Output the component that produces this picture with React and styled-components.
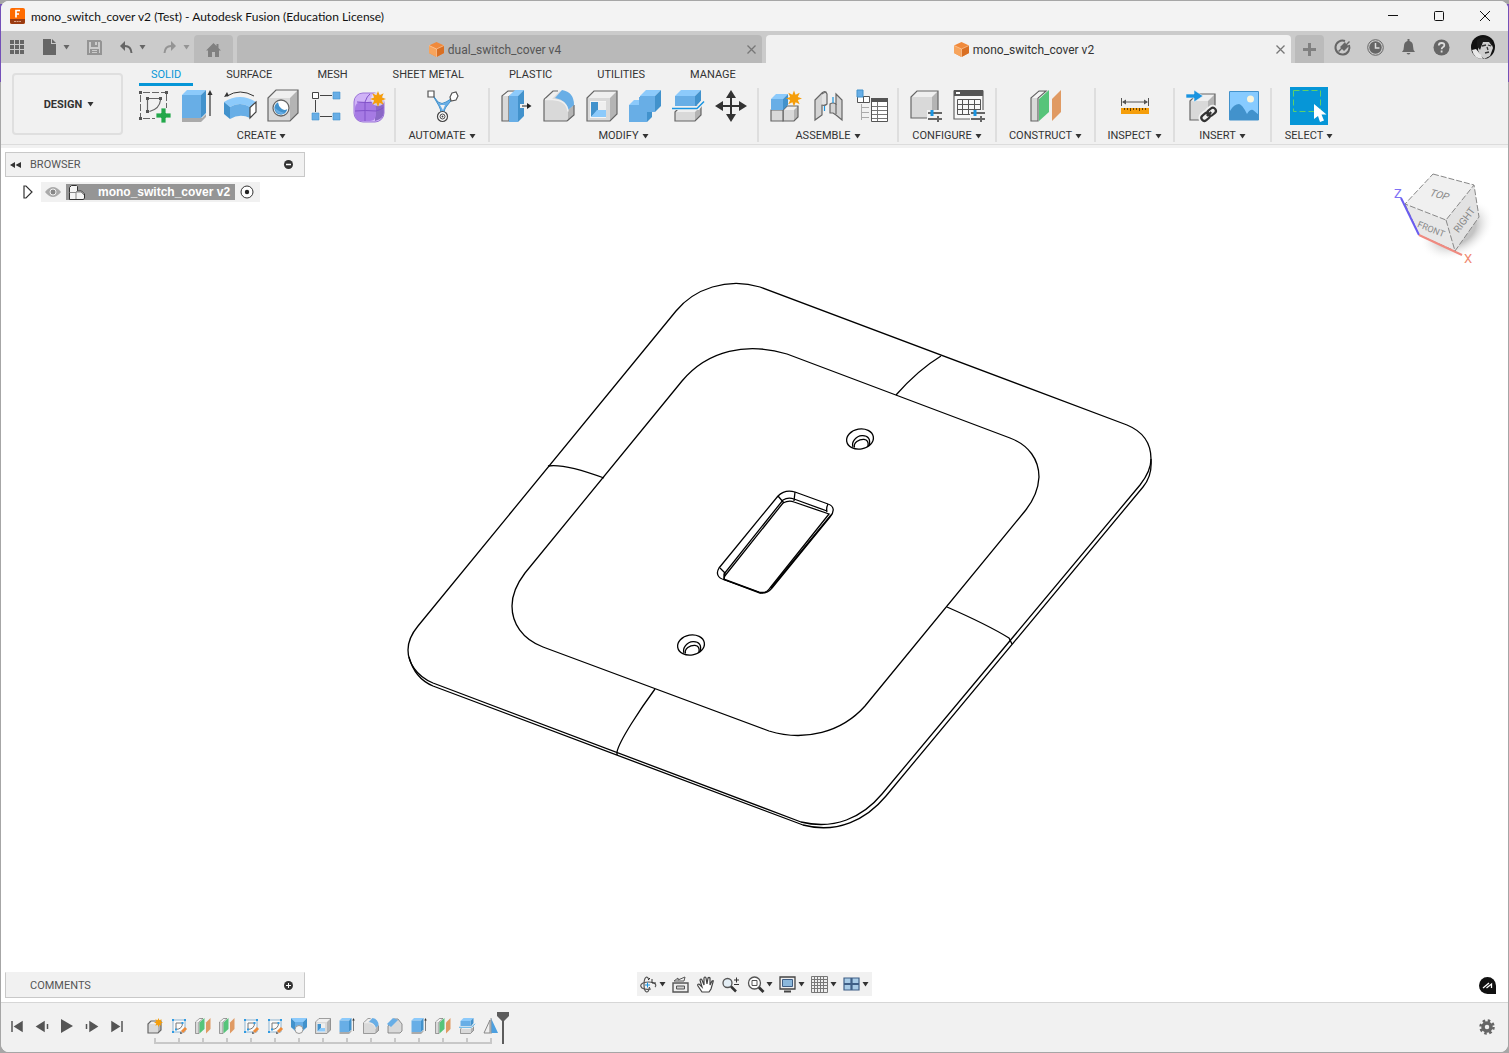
import React from "react";
import styled, { createGlobalStyle, css } from "styled-components";

const GlobalStyle = createGlobalStyle`
  * { box-sizing: border-box; }
  body { margin: 0; background: #fff; color: #333; font-family: Roboto, "Liberation Sans", sans-serif; font-size: 11px; }
  button { border: 0; padding: 0; margin: 0; background: none; color: inherit; font: inherit; cursor: pointer; }
  svg { display: block; flex: none; overflow: visible; }
`;

const Frame = styled.div`
  min-height: 100vh;
  padding: 1px;
  display: flex;
  background: linear-gradient(#a6a6a6 4px, #7450b8 4px 82px, #a6a6a6 82px);
`;

const Window = styled.div`
  flex: 1;
  min-width: 0;
  display: flex;
  flex-direction: column;
  border-radius: 8px;
  overflow: hidden;
  background: #fff;
`;

/* ---------- title bar ---------- */
const TitleBar = styled.header`
  height: 30px;
  display: flex;
  align-items: center;
  background: #f3f3f3;
  color: #111;
  padding-left: 9px;
`;

const Title = styled.h1`
  flex: 1;
  margin: 0 0 0 6px;
  font: 400 12px Lato, "Open Sans", sans-serif;
  white-space: nowrap;
`;

const WindowButton = styled.button`
  width: 46px;
  height: 30px;
  display: grid;
  place-items: center;
`;

/* ---------- document tabs ---------- */
const TabBar = styled.div`
  height: 32px;
  display: flex;
  align-items: flex-end;
  background: #cbcbcb;
`;

const QuickAccess = styled.div`
  height: 32px;
  display: flex;
  align-items: center;
  gap: 17px;
  padding: 0 4px 0 9px;
  color: #666;
`;

const QuickButton = styled.button`
  display: flex;
  align-items: center;
  gap: 5px;
  height: 20px;
  color: ${(p) => (p.$dim ? "#949494" : "#666")};
`;

const HomeTab = styled.button`
  width: 39px;
  height: 28px;
  margin-right: 4px;
  padding-top: 2px;
  display: grid;
  place-items: center;
  background: #bbb;
  border-radius: 4px 4px 0 0;
  color: #808080;
`;

const DocTab = styled.div`
  flex: 1;
  height: 28px;
  margin-right: 4px;
  padding: 1px 6px 0;
  display: flex;
  align-items: center;
  border-radius: 4px 4px 0 0;
  background: ${(p) => (p.$active ? "#f1f1f1" : "#b9b9b9")};
  color: ${(p) => (p.$active ? "#333" : "#555")};
`;

const DocName = styled.button`
  flex: 1;
  display: flex;
  justify-content: center;
  align-items: center;
  gap: 4px;
  font-size: 12px;
  line-height: 20px;
`;

const AddTab = styled.button`
  width: 29px;
  height: 28px;
  display: grid;
  place-items: center;
  background: #bbb;
  border-radius: 4px 4px 0 0;
`;

const AccountTools = styled.div`
  height: 32px;
  display: flex;
  align-items: center;
  gap: 16px;
  padding: 0 13px 0 10px;
  color: #666;
`;

/* ---------- ribbon ---------- */
const Ribbon = styled.div`
  display: flex;
  align-items: flex-start;
  background: #f1f1f1;
  height: 82px;
  border-bottom: 1px solid #dcdcdc;
`;

const RibbonEdge = styled.div`
  height: 3px;
  background: #f1f1f1;
`;

const WorkspaceButton = styled.button`
  width: 111px;
  height: 62px;
  margin: 10px 6px 0 11px;
  padding-left: 3px;
  display: flex;
  align-items: center;
  justify-content: center;
  gap: 5px;
  border: 2px solid #dfdfdf;
  border-radius: 4px;
  font-weight: 700;
`;

const RibbonTabs = styled.nav`
  display: flex;
  gap: 21px;
  padding-left: 10px;
`;

const RibbonTab = styled.button`
  height: 23px;
  padding: 2px 12px 0;
  border-bottom: 3px solid ${(p) => (p.$active ? "#0696d7" : "transparent")};
  color: ${(p) => (p.$active ? "#0696d7" : "#333")};
  white-space: nowrap;
`;

const Groups = styled.div`
  display: flex;
  margin-top: 2px;
`;

const Group = styled.section`
  width: ${(p) => p.$width}px;
  height: 54px;
  display: flex;
  flex-direction: column;
  align-items: center;
  &:not(:last-child) { border-right: 2px solid #dedede; }
`;

const GroupTools = styled.div`
  height: 36px;
  flex: none;
  display: flex;
  align-items: center;
  gap: 11px;
`;

const Tool = styled.button`
  width: 32px;
  height: 32px;
  ${(p) => p.$selected && css`
    width: 38px;
    height: 38px;
    background: #0696d7;
  `}
`;

const GroupLabel = styled.button`
  margin-top: 4px;
  flex: none;
  display: flex;
  align-items: center;
  gap: 3px;
  line-height: 16px;
  white-space: nowrap;
`;

/* ---------- canvas ---------- */
const Canvas = styled.main`
  flex: 1;
  position: relative;
  min-height: 600px;
  display: flex;
  flex-direction: column;
  justify-content: space-between;
`;

const ModelView = styled.svg`
  position: absolute;
  inset: 0;
  width: 100%;
  height: 100%;
`;

const BrowserPanel = styled.aside`
  position: relative;
  width: 300px;
  margin: 4px 0 0 4px;
`;

const PanelBar = styled.div`
  width: 300px;
  height: ${(p) => (p.$open ? 26 : 25)}px;
  display: flex;
  align-items: center;
  padding: 0 11px 0 4px;
  background: #f1f1f1;
  border: 1px solid #c8c8c8;
  ${(p) => p.$open && css`border-top-color: #f1f1f1;`}
`;

const PanelTitle = styled.h2`
  flex: 1;
  margin: 0 0 0 ${(p) => (p.$indent ? 20 : 9)}px;
  font-size: 11px;
  font-weight: 400;
  color: #555;
`;

const TreeRow = styled.div`
  display: flex;
  align-items: center;
  height: 20px;
  margin: 5px 0 0 17px;
`;

const TreeItem = styled.div`
  display: flex;
  align-items: center;
  height: 20px;
  margin-left: 7px;
  padding: 0 6px 0 4px;
  gap: 5px;
  background: #f1f1f1;
`;

const TreeName = styled.button`
  height: 16px;
  width: 169px;
  padding-left: 2px;
  display: flex;
  align-items: center;
  gap: 12px;
  background: #959595;
  color: #fff;
  font: 700 12px/16px "Liberation Sans", Arial, sans-serif;
  white-space: nowrap;
`;

const CubeHolder = styled.div`
  position: absolute;
  top: 12px;
  right: 0;
`;

const CanvasFooter = styled.div`
  position: relative;
  display: grid;
  grid-template-columns: 1fr auto 1fr;
  align-items: start;
  padding: 0 4px 4px;
`;

const NavBar = styled.div`
  height: 24px;
  display: flex;
  align-items: center;
  gap: 6px;
  padding: 0 3px;
  background: #f1f1f1;
`;

const NavButton = styled.button`
  display: flex;
  align-items: center;
  gap: 2px;
  padding-right: ${(p) => (p.$menu ? 0 : 2)}px;
`;

const AssistantButton = styled.button`
  justify-self: end;
  margin: 5px 8px 0 0;
`;

/* ---------- timeline ---------- */
const Timeline = styled.footer`
  height: 50px;
  display: flex;
  align-items: flex-start;
  padding: 9px 13px 0 8px;
  background: #f1f1f1;
  border-top: 1px solid #d6d6d6;
`;

const Playback = styled.div`
  display: flex;
  gap: 9px;
  padding-top: 6px;
  margin-right: 18px;
`;

const Features = styled.ol`
  display: flex;
  margin: 0;
  padding: 6px 0 0;
  list-style: none;
`;

const Feature = styled.li`
  width: 24px;
  height: 26px;
  display: flex;
  flex-direction: column;
  align-items: center;
  background:
    linear-gradient(#c8c8c8, #c8c8c8) ${(p) => (p.$first ? "right" : "left")} bottom / ${(p) => (p.$first || p.$last ? "50%" : "100%")} 2px no-repeat,
    linear-gradient(#c8c8c8, #c8c8c8) center bottom / 2px 6px no-repeat;
`;

const Marker = styled.div`
  margin-left: -6px;
`;

const Spacer = styled.div`
  flex: 1;
`;

/* ---------- icons ---------- */
const Svg = ({ size = 16, w, h, box, children }) => (
  <svg width={w || size} height={h || size} viewBox={box || `0 0 ${w || size} ${h || size}`} fill="none" aria-hidden="true">
    {children}
  </svg>
);

const Caret = ({ color = "#333" }) => (
  <Svg w={7} h={5}><path d="M.5 0h6L3.500 4.500z" fill={color} /></Svg>
);

const BLUE = ["#68aee6", "#8ccafb", "#4292cc", "none"];
const GRAY = ["#d9d9d9", "#efefef", "#b4b4b4", "#666"];

// box with its front at x,y and its depth going up and to the right
const Box = ({ x, y, w, h, d, tone = GRAY }) => (
  <g>
    <path d={`M${x} ${y}l${d}-${d}h${w}l-${d} ${d}z`} fill={tone[1]} />
    <path d={`M${x + w} ${y}l${d}-${d}v${h}l-${d} ${d}z`} fill={tone[2]} />
    <path d={`M${x} ${y}h${w}v${h}h-${w}z`} fill={tone[0]} />
    <path d={`M${x} ${y}l${d}-${d}h${w}v${h}l-${d} ${d}h-${w}z`} stroke={tone[3]} strokeWidth="1.2" />
  </g>
);

const Star = ({ x, y, r = 8 }) => {
  const points = Array.from({ length: 16 }, (_, i) => {
    const a = (i * Math.PI) / 8;
    const d = i % 2 ? r * 0.52 : r;
    return `${(x + Math.sin(a) * d).toFixed(1)},${(y - Math.cos(a) * d).toFixed(1)}`;
  });
  return <polygon points={points.join(" ")} fill="#f59e0b" />;
};

const Sliders = () => (
  <g>
    <path d="M17 20h16v12H17z" fill="#f1f1f1" />
    <path d="M18 23h14M18 29h14" stroke="#666" strokeWidth="2" />
    <path d="M22 20v6" stroke="#1a94e0" strokeWidth="3" />
    <path d="M28 26v6" stroke="#666" strokeWidth="2" />
  </g>
);

const SketchArt = () => (
  <g>
    <path d="M2.500 5v22M5 2.500h22M28.500 4v14M5 28.500h12" stroke="#666" strokeDasharray="7 2" />
    <path d="M1 1h3v3H1zM27 1h3v3h-3zM1 27h3v3H1zM8 7h3v3H8zM21 7h3v3h-3zM8 20h3v3H8z" fill="#555" />
    <path d="M11 8.500h10M9.500 10v10M22.500 10q-1 9-11 11.500" stroke="#666" strokeWidth="1.200" />
  </g>
);

const ExtrudeArt = () => (
  <g>
    <path d="M1 28h20l4-4v3l-5 5H1z" fill="#aaa" />
    <Box x={1} y={5} w={19} h={23} d={5} tone={BLUE} />
    <path d="M29 26V3" stroke="#333" strokeWidth="1.200" />
    <path d="M26.500 5L29 0l2.500 5z" fill="#333" />
  </g>
);

const FilletArt = () => (
  <g>
    <path d="M1 9.500L10 1h6q14 2 15 14v10l-7 6H1z" fill="#d9d9d9" />
    <path d="M1 9l9-8h7L9 9z" fill="#efefef" />
    <path d="M25 20l6-5v10l-6 6z" fill="#b4b4b4" />
    <path d="M1 9.500L10 1h5M31 15v10l-7 6H1V9.500" stroke="#666" strokeWidth="1.200" />
    <path d="M12 8l7-8q12 2 12 15l-6 5Q24 10 12 8z" fill="#68aee6" />
    <path d="M2 9.500h8q14 1 15 12" stroke="#efefef" strokeWidth="1.500" />
  </g>
);

const ShellArt = () => (
  <g>
    <Box x={1} y={8} w={23} h={23} d={7} />
    <path d="M4 11h16v17H4z" fill="#f5f5f5" />
    <path d="M5 12h7v9l-7 6z" fill="#4292cc" />
    <path d="M5 27l6-7h9v7z" fill="#8ccafb" />
    <path d="M12 12h8v8h-8z" fill="#efefef" />
  </g>
);

const SplitArt = () => (
  <g>
    <Box x={3} y={22} w={20} h={9} d={6} />
    <Box x={3} y={6} w={20} h={11} d={6} tone={BLUE} />
    <path d="M0 18h26l6-8" stroke="#f1f1f1" strokeWidth="4" />
    <path d="M0 18.500h25l7-7" stroke="#1a94e0" strokeWidth="1.500" />
  </g>
);

const PlanesArt = () => (
  <g>
    <path d="M1 8l8-7h7l-8 7v23H1z" fill="#d9d9d9" stroke="#666" strokeWidth="1.200" />
    <path d="M2 8l7-6h5L7 8z" fill="#f4f4f4" />
    <path d="M9 9l10-9v22l-10 9z" fill="#56c47a" />
    <path d="M22 9l9-9v22l-9 9z" fill="#e09a63" />
  </g>
);

const art = {
  sketch: (
    <g>
      <SketchArt />
      <path d="M23 18h5v5h5v5h-5v5h-5v-5h-5v-5h5z" fill="#22a84a" stroke="#f1f1f1" strokeWidth=".8" />
    </g>
  ),
  extrude: <ExtrudeArt />,
  revolve: (
    <g>
      <path d="M0 12Q16 2 32 12l-6 5Q16 11 6 17z" fill="#8ccafb" />
      <path d="M0 12l6 5v12l-6-5z" fill="#4292cc" />
      <path d="M6 17q10-6 20 0v11q-10-5-20 1z" fill="#68aee6" />
      <path d="M26 17.500l6-5.500v10l-6 6z" fill="#fff" stroke="#444" strokeWidth="1.200" />
      <path d="M3 6Q16-2 30 6" stroke="#333" />
      <path d="M0 7l3-5 2 4z" fill="#333" />
    </g>
  ),
  hole: (
    <g>
      <Box x={1} y={8} w={22} h={23} d={8} />
      <circle cx="14" cy="18" r="8" fill="#fff" stroke="#666" strokeWidth="1.300" />
      <path d="M11 12.300a6.500 6.500 0 1 0 9.300 6.700q-3 2-6-.5T11 12.300z" fill="#4292cc" />
      <path d="M8 18a6.500 6.500 0 0 0 10 5q-6-1-10-5z" fill="#68aee6" />
    </g>
  ),
  pattern: (
    <g>
      <path d="M10 5.500h12M5.500 10v12M10 26.500h12" stroke="#444" />
      <path d="M2.500 2.500h6v6h-6z" fill="#fff" stroke="#444" />
      <path d="M23 2h7v7h-7zM2 23h7v7H2zM23 23h7v7h-7z" fill="#68aee6" stroke="#4292cc" strokeWidth=".6" />
    </g>
  ),
  form: (
    <g>
      <rect x="1" y="3" width="30" height="29" rx="9" fill="#d0b3f7" />
      <path d="M22 12l9-2v13q0 5-9 8z" fill="#8a68c6" />
      <rect x="2" y="12" width="21" height="19" rx="6" fill="#a67ae4" />
      <path d="M2 21q10-1 21 0 5-1 8-4M12 12v19M4 12q10 1 19 0 4-2 7-4M12 12q2-6 5-8" stroke="#8152c9" />
      <rect x="1" y="3" width="30" height="29" rx="9" stroke="#9b74d8" />
      <circle cx="25" cy="9" r="7" fill="#f1f1f1" opacity=".7" />
      <Star x={25} y={9} r={8} />
    </g>
  ),
  automate: (
    <g>
      <path d="M6 4l6 8q4 3 8 0l8-5-8 10q-2 2-2 8h-3q0-6-2-9z" fill="#68aee6" stroke="#4292cc" />
      <path d="M14 15h5l-2 5z" fill="#f1f1f1" />
      <path d="M2 1h6v6H2z" fill="#fff" stroke="#555" strokeWidth="1.200" />
      <path d="M26 3l4-1 2 4-2 4-5 1-1-4z" fill="#fff" stroke="#555" strokeWidth="1.200" />
      <circle cx="16.500" cy="26.500" r="5" fill="#fff" stroke="#444" strokeWidth="1.200" />
      <circle cx="16.500" cy="26.500" r="2.500" stroke="#444" />
      <circle cx="16.500" cy="26.500" r="1" fill="#444" />
    </g>
  ),
  pressPull: (
    <g>
      <path d="M2 6l6-5h8l-7 5v25H2z" fill="#d9d9d9" stroke="#666" strokeWidth="1.200" />
      <path d="M3 6l5-4h6L9 6z" fill="#f4f4f4" />
      <Box x={9} y={6} w={9} h={26} d={6} tone={BLUE} />
      <path d="M20 16h11" stroke="#f1f1f1" strokeWidth="4" />
      <path d="M22 16h6" stroke="#222" />
      <path d="M27 13l4.500 3-4.500 3z" fill="#222" />
    </g>
  ),
  fillet: <FilletArt />,
  shell: <ShellArt />,
  combine: (
    <g>
      <Box x={11} y={6} w={15} h={16} d={6} tone={BLUE} />
      <path d="M0 15l5-5h7v8z" fill="#8ccafb" />
      <path d="M18 22h5v5l-5 5z" fill="#4292cc" />
      <path d="M0 15h10V7h15v15h-7v10H0z" fill="#68aee6" />
    </g>
  ),
  split: <SplitArt />,
  move: (
    <g>
      <path d="M16 5v22M5 16h22" stroke="#333" strokeWidth="2" />
      <path d="M16 0l5 8H11zM16 32l5-8H11zM0 16l8-5v10zM32 16l-8-5v10z" fill="#333" />
    </g>
  ),
  component: (
    <g>
      <Box x={14} y={20} w={11} h={11} d={4} />
      <path d="M2 20h12v11H2z" fill="#d9d9d9" stroke="#666" strokeWidth="1.200" />
      <Box x={2} y={9} w={12} h={11} d={5} tone={BLUE} />
      <Star x={25} y={8.500} r={8} />
    </g>
  ),
  joint: (
    <g stroke="#666" strokeWidth="1.200">
      <path d="M3 10l7-7q2-2 4-1v11l-4 2v10l-7 5z" fill="#d4d4d4" />
      <path d="M10 4q4-3 5 0v10q-2 2-5 1" fill="#e4e4e4" />
      <path d="M24 4l6 6v20l-6-5-3-2h-3v-9q3-2 6 0z" fill="#d4d4d4" />
      <path d="M24 14v10" />
      <path d="M12.500 16v5M21 7v6" stroke="#1a94e0" />
    </g>
  ),
  bom: (
    <g>
      <path d="M2.500 6.500h12v6h-12zM8.500 6.500v6" fill="#fff" stroke="#555" />
      <path d="M2 0h6v7H2z" fill="#68aee6" stroke="#4292cc" />
      <path d="M6.500 14v16M6.500 17.500H14M6.500 22.500H14M6.500 27.500H14" stroke="#aaa" />
      <path d="M16.500 8.500h16v23h-16z" fill="#fff" stroke="#555" />
      <path d="M16 8h17v4H16z" fill="#555" />
      <path d="M17 16.500h15M17 20.500h15M17 24.500h15M17 28.500h15M22.500 12v19" stroke="#777" />
    </g>
  ),
  configure: <g><Box x={1} y={7} w={21} h={21} d={6} /><Sliders /></g>,
  configTable: (
    <g>
      <path d="M1 1h29v28H1z" fill="#f8f8f8" stroke="#666" strokeWidth="1.200" />
      <path d="M1 0h29v6H1z" fill="#555" /><path d="M3 2h4v2H3z" fill="#fff" />
      <path d="M4.500 9.500h23v15h-23zM4.500 14.500h23M4.500 19.500h23M9.500 9v16M15.500 9v16M21.500 9v16" stroke="#555" />
      <Sliders />
    </g>
  ),
  planes: <PlanesArt />,
  measure: (
    <g>
      <path d="M2.500 8v8M29.500 8v8M4 12h24" stroke="#555" />
      <path d="M3 12l4-2.500v5zM29 12l-4-2.500v5z" fill="#555" />
      <path d="M2 18h28v6H2z" fill="#f59e0b" />
      <path d="M5.500 18v2M8.500 18v2M11.500 18v3M14.500 18v2M17.500 18v2M20.500 18v3M23.500 18v2M26.500 18v2" stroke="#6b4200" />
    </g>
  ),
  insert: (
    <g>
      <Box x={5} y={11} w={18} h={19} d={7} />
      <path d="M1 4h8V0l9 6-9 6V8H1z" fill="#1a94e0" stroke="#f1f1f1" strokeWidth=".6" />
      <g stroke="#f1f1f1" strokeWidth="6" transform="rotate(-40 24 24)"><rect x="15" y="21" width="9" height="6" rx="3" /><rect x="23" y="21" width="9" height="6" rx="3" /></g>
      <g stroke="#333" strokeWidth="2.200" transform="rotate(-40 24 24)"><rect x="15" y="21" width="9" height="6" rx="3" /><rect x="23" y="21" width="9" height="6" rx="3" /><path d="M21 24h6" /></g>
    </g>
  ),
  image: (
    <g>
      <path d="M2 2h29v28H2z" fill="#87cbff" />
      <path d="M2 21q4-7 9-7 3 0 8 10 3-5 6-4l6 5v5H2z" fill="#4292cc" />
      <circle cx="22.500" cy="9" r="3.500" fill="#faf5dc" />
      <path d="M1.500 1.500h29v28.500H1.500z" stroke="#4292cc" />
    </g>
  ),
};

const SelectIcon = () => (
  <Svg size={38}>
    <path d="M3.500 3.500h27v21h-27z" stroke="#5fd068" strokeDasharray="6 3" />
    <path d="M24 17v15l4-3 2 6 4-1.500-2.500-6h5z" fill="#fff" />
  </Svg>
);

const SmallSketch = () => (
  <Svg size={16}>
    <path d="M2 2h12v12H2z" fill="#fbfbfb" stroke="#8fb4d0" />
    <path d="M5 5h6.500q0 6-6.500 6.500z" stroke="#777" />
    <path d="M1 1h2v2H1zM13 1h2v2h-2zM1 13h2v2H1zM10.500 4h2v2h-2zM4 10.500h2v2H4z" fill="#2f9be3" />
    <path d="M11 14l4-4" stroke="#ee8b3a" strokeWidth="3" /><path d="M9 16l.5-2.500 2 2z" fill="#555" />
  </Svg>
);

const Small = ({ name }) => <Svg size={16} box="0 0 32 32">{art[name]}</Svg>;

const features = [
  ["Component", <Svg size={16}><Box x={1} y={6} w={10} h={9} d={3} /><Star x={11.500} y={4.500} r={4.500} /></Svg>],
  ["Sketch1", <SmallSketch />],
  ["Plane1", <Small name="planes" />],
  ["Plane2", <Small name="planes" />],
  ["Sketch2", <SmallSketch />],
  ["Sketch3", <SmallSketch />],
  ["Loft1", (
    <Svg size={16}>
      <path d="M0 0l4 4h8l4-4v9l-4 4H4L0 9z" fill="#68aee6" /><path d="M0 0v9l4 3V4zM16 0v9l-4 3V4z" fill="#4292cc" />
      <path d="M0 0h16l-4 4H4z" fill="#8ccafb" />
      <circle cx="8" cy="11.500" r="4" fill="#f5f5f5" stroke="#999" />
    </Svg>
  )],
  ["Shell1", <Small name="shell" />],
  ["Extrude1", <Small name="extrude" />],
  ["Fillet1", <Small name="fillet" />],
  ["Chamfer1", (
    <Svg size={16}>
      <path d="M1 8l6-7h4l4 5v7l-2 2H1z" fill="#d9d9d9" stroke="#777" strokeWidth=".8" /><path d="M0 6l6-6 5 2-7 7z" fill="#68aee6" />
    </Svg>
  )],
  ["Extrude2", <Small name="extrude" />],
  ["Plane3", <Small name="planes" />],
  ["Split1", <Small name="split" />],
  ["Mirror1", (
    <Svg size={16}>
      <path d="M7 2v13H1z" fill="#efefef" stroke="#888" /><path d="M8 0l7 15H8z" fill="#4da0e0" /><path d="M8 0v16" stroke="#999" />
    </Svg>
  )],
];

const groups = [
  ["CREATE", 267, ["sketch", "extrude", "revolve", "hole", "pattern", "form"]],
  ["AUTOMATE", 94, ["automate"]],
  ["MODIFY", 269, ["pressPull", "fillet", "shell", "combine", "split", "move"]],
  ["ASSEMBLE", 140, ["component", "joint", "bom"]],
  ["CONFIGURE", 98, ["configure", "configTable"]],
  ["CONSTRUCT", 99, ["planes"]],
  ["INSPECT", 79, ["measure"]],
  ["INSERT", 97, ["insert", "image"]],
  ["SELECT", 74, ["select"]],
];

const ribbonTabs = ["SOLID", "SURFACE", "MESH", "SHEET METAL", "PLASTIC", "UTILITIES", "MANAGE"];

const DocCube = () => (
  <Svg size={15}>
    <path d="M7.500 0L15 3.500v7.500L7.500 15 0 11V3.500z" fill="#f08a3c" />
    <path d="M0 3.500L7.500 7v8L0 11z" fill="#f7a45c" /><path d="M7.500 7L15 3.500V11l-7.500 4z" fill="#d96f23" />
    <path d="M0 3.500L7.500 7 15 3.500M7.500 7v8" stroke="#ffd9b5" strokeWidth=".6" />
  </Svg>
);

const CloseX = () => <Svg size={9}><path d="M.5.5l8 8M8.500.5l-8 8" stroke="#777" strokeWidth="1.300" /></Svg>;

const Avatar = () => (
  <Svg size={24}>
    <circle cx="12" cy="12" r="12" fill="#111" />
    <path d="M8 7q6-4 12 0l2 6-3 8-6 3-4-4-2-5z" fill="#cfcfcf" />
    <path d="M1 15l4-1 5 6 2 4q-9 0-11-9z" fill="#e8e8e8" />
    <path d="M6 5q7-6 15 2v4l-3-4-6 0-3 8-3-4z" fill="#1a1a1a" />
    <path d="M11 11l4-1M17 10l3 1M14 18l4-1M16 12l1 3" stroke="#333" strokeWidth="1.300" />
  </Svg>
);

const ScrewHole = ({ x, y }) => (
  <g transform={`translate(${x} ${y})`}>
    <ellipse rx="13.500" ry="10" transform="rotate(-10)" />
    <path d="M-7 8C-9 3-4-3 2-3.300S11 0 9 6.500" />
    <path d="M-5.500 8.500C-7 4-1 0 4 .3Q9 1 8 7" />
  </g>
);

const Model = () => (
  <ModelView viewBox="1 148 1507 854" role="img" aria-label="Switch cover model">
    <g fill="none" stroke="#000" strokeWidth="1.300">
      {/* outer plate edge, with its thickness below and to the right */}
      <path d="M418 626L676 311C694 289 727 277 760 287L1127 425C1144 432 1151 445 1151 459C1151 468 1147 476 1140 485L882 794C862 818 834 830 801 822L433 683C416 676 408 662 408 650Q408 638 418 626z" />
      <path d="M409 657C413 672 421 681 433 686L803 825C837 834 866 820 886 796L1143 487C1149 480 1152 471 1151 459" />
      {/* raised centre */}
      <path d="M525 573L682 381C708 350 747 342 787 354L1010 438C1029 445 1039 460 1039 477Q1038 495 1025 511L865 706C842 732 805 742 769 731L543 647C522 639 512 623 512 606Q512 590 525 573z" />
      <path d="M548 466C560 464 585 471 604 478M896 395Q918 370 941 356M947 607Q988 625 1009 638l3 6M655 689C641 708 619 741 617 752v3" />
      {/* switch opening */}
      <path d="M719 568L778 496Q785 489 795 492L828 504C834 506 835 511 830 517L772 588Q767 594 760 593L725 580C717 578 716 573 719 568z" />
      <path d="M724 577L783 503Q789 500 794 502L829 514L770 588Q766 594 759 592L724 579V574L783 500Q788 497 794 499L827 511" />
      <path d="M831 515L771 588M778 496l6 7M795 492l-1 9M828 504q-2 4-1 8M720 568l5 5-1 7M725 580l36 13" />
      <ScrewHole x={860} y={439} />
      <ScrewHole x={691} y={645} />
    </g>
  </ModelView>
);

const ViewCube = () => (
  <svg width="128" height="115" viewBox="1380 160 128 115" role="img" aria-label="View cube">
    <defs>
      <radialGradient id="shade"><stop offset="50%" stopColor="#c4c4c4" /><stop offset="100%" stopColor="#fff" stopOpacity="0" /></radialGradient>
    </defs>
    <ellipse cx="1457" cy="230" rx="40" ry="27" fill="url(#shade)" transform="rotate(-30 1457 230)" />
    <path d="M1433 174l41 11-28 35-41-16z" fill="#f0f0f0" />
    <path d="M1405 204l41 16 9 31-36-16z" fill="#e8e8e8" />
    <path d="M1446 220l28-35 5 32-24 34z" fill="#e2e2e2" />
    <path d="M1433 174l41 11-28 35-41-16zM1446 220l9 31 24-34-5-32M1405 204l14 31 36 16" fill="none" stroke="#888" strokeDasharray="6 2" />
    <path d="M1401 198l18 37" stroke="#6a5cf0" strokeWidth="2" />
    <path d="M1419 235l43 20" stroke="#f08a80" strokeWidth="2" />
    <g fontFamily="Roboto, sans-serif" fontSize="10" fill="#888" textAnchor="middle">
      <text transform="translate(1438 198) rotate(15) skewX(-15)">TOP</text>
      <text transform="translate(1430 232) rotate(22)" fontSize="9">FRONT</text>
      <text transform="translate(1467 222) rotate(-53)">RIGHT</text>
    </g>
    <g fontFamily="Roboto, sans-serif" fontSize="13">
      <text x="1394" y="198" fill="#7d70f5">Z</text>
      <text x="1464" y="263" fill="#f08a70">X</text>
    </g>
  </svg>
);

const ink = "#555";

const navTools = [
  ["Orbit", true, (
    <Svg size={17}>
      <path d="M11 13q-6 1-9-1-3-3 1-5 6-2 11 0 3 2 1 4" stroke={ink} strokeWidth="1.200" />
      <path d="M9 4Q8 1 6.500 1 4 2 4 8.500t2.500 7.500Q9 16 9.500 11" stroke={ink} strokeWidth="1.200" />
      <path d="M12 3v4h4M8 4l2-2" stroke="#333" /><path d="M7.500 6.500v5M5 9h5" stroke="#1a94e0" />
    </Svg>
  )],
  ["Look at", false, (
    <Svg size={17}><path d="M1 7h15v9H1z" fill="#eee" stroke={ink} strokeWidth="1.400" /><path d="M4.500 10h8v3h-8z" fill="#ccc" stroke={ink} /><path d="M2 5l4-3v2l7-3-1 4z" stroke={ink} /></Svg>
  )],
  ["Pan", false, (
    <Svg size={17}>
      <path d="M5 16L1 10q-1-2 1-2l3 3-2-7q1-2 2 0l2 5V2q1-2 2 0l1 6 1-6q1-1 2 0v7l2-4q2-1 1 1l-2 7-2 3z" fill="#fff" stroke="#444" strokeWidth="1.200" />
    </Svg>
  )],
  ["Zoom", false, (
    <Svg size={17}>
      <circle cx="5.500" cy="7" r="4.500" fill="#e4eef5" stroke={ink} strokeWidth="1.300" /><path d="M9 10.500l5 5" stroke="#333" strokeWidth="2.500" />
      <path d="M12 4h5M14.500 1.500v5M12 8.500h5" stroke="#333" />
    </Svg>
  )],
  ["Fit", true, (
    <Svg size={17}><circle cx="7.500" cy="7" r="6" fill="#fff" stroke={ink} strokeWidth="1.300" /><path d="M5 4.500h5v5H5z" stroke={ink} /><path d="M12 11.500l4.500 4.500" stroke="#333" strokeWidth="2.800" /></Svg>
  )],
  ["Display settings", true, (
    <Svg size={17}><path d="M1 1h15v12H1z" fill="#eee" stroke="#444" strokeWidth="1.300" /><path d="M3.500 3.500h10v7h-10z" fill="#8bb8dc" stroke="#3f5f86" /><path d="M5 15.500h7" stroke="#444" strokeWidth="2" /></Svg>
  )],
  ["Grid and snaps", true, (
    <Svg size={17}><path d="M1 1h15v15H1z" fill="#eee" /><path d="M.5.5h16v16H.5zM3.500 1v15M6.500 1v15M9.500 1v15M12.500 1v15M1 3.500h15M1 6.500h15M1 9.500h15M1 12.500h15" stroke="#777" /></Svg>
  )],
  ["Viewports", true, (
    <Svg w={17} h={14}><path d="M1 1h7v5.500H1zM9 1h7v5.500H9zM1 7.500h7V13H1zM9 7.500h7V13H9z" fill="#a8cbe6" stroke="#3f5f86" strokeWidth="1.200" /></Svg>
  )],
];

const playback = [
  ["Go to start", "M3 3v11M13 4v9L6 8.500z"],
  ["Step back", "M10 4v9L3 8.500zM13.500 6v5"],
  ["Play", "M2 1l12 7-12 7z"],
  ["Step forward", "M6 4v9l7-4.500zM2.500 6v5"],
  ["Go to end", "M3 4v9l7-4.500zM13 3v11"],
];

export default function App() {
  return (
    <Frame>
      <GlobalStyle />
      <Window>
        <TitleBar>
          <Svg w={15} h={16}>
            <rect width="15" height="16" rx="2" fill="#ff6b00" /><path d="M0 11h15v3q0 2-2 2H2q-2 0-2-2z" fill="#9a3b12" />
            <path d="M6 9.500V2.500h4M6 6h3" stroke="#fff" strokeWidth="1.700" /><path d="M4 13.500h7" stroke="#d9a58d" strokeDasharray="2 .6" />
          </Svg>
          <Title>mono_switch_cover v2 (Test) - Autodesk Fusion (Education License)</Title>
          <WindowButton aria-label="Minimize"><Svg size={10}><path d="M0 4.500h10" stroke="#111" /></Svg></WindowButton>
          <WindowButton aria-label="Maximize"><Svg size={10}><rect x=".5" y=".5" width="9" height="9" rx="1" stroke="#111" /></Svg></WindowButton>
          <WindowButton aria-label="Close"><Svg size={10}><path d="M0 0l10 10M10 0L0 10" stroke="#111" /></Svg></WindowButton>
        </TitleBar>

        <TabBar>
          <QuickAccess>
            <QuickButton aria-label="Data panel">
              <Svg w={16} h={15}><path d="M0 0h4v4H0zM5 0h4v4H5zM10 0h4v4h-4zM0 5h4v4H0zM5 5h4v4H5zM10 5h4v4h-4zM0 10h4v4H0zM5 10h4v4H5zM10 10h4v4h-4z" fill="currentColor" /></Svg>
            </QuickButton>
            <QuickButton aria-label="File">
              <Svg w={15} h={16}><path d="M0 0h8v5h5v11H0zM9 0l4 4H9z" fill="currentColor" /></Svg><Caret color="#666" />
            </QuickButton>
            <QuickButton $dim aria-label="Save">
              <Svg w={15} h={15}><path d="M1 1h12l1 1v12H1z" stroke="currentColor" strokeWidth="2" /><path d="M4 1h7v6H4zM3 9h9v5H3z" fill="currentColor" /><path d="M8 2h2v3H8zM5 10h5v1H5zM5 12h5v1H5z" fill="#cbcbcb" /></Svg>
            </QuickButton>
            <QuickButton aria-label="Undo">
              <Svg w={15} h={13}><path d="M3 5h3q6 0 6.500 7" stroke="currentColor" strokeWidth="2" /><path d="M6 0v10L1 5z" fill="currentColor" /></Svg><Caret color="#666" />
            </QuickButton>
            <QuickButton $dim aria-label="Redo">
              <Svg w={15} h={13}><path d="M10 5H8q-6 0-6.500 7" stroke="currentColor" strokeWidth="2" /><path d="M8 0v10l5-5z" fill="currentColor" /></Svg><Caret color="#949494" />
            </QuickButton>
          </QuickAccess>
          <HomeTab aria-label="Home">
            <Svg w={15} h={14}><path d="M7.500 0l3 3V1h2v4L15 7.500h-2V14H9V9H6v5H2V7.500H0z" fill="currentColor" /></Svg>
          </HomeTab>
          <DocTab>
            <DocName><DocCube />dual_switch_cover v4</DocName>
            <button aria-label="Close dual_switch_cover v4"><CloseX /></button>
          </DocTab>
          <DocTab $active>
            <DocName><DocCube />mono_switch_cover v2</DocName>
            <button aria-label="Close mono_switch_cover v2"><CloseX /></button>
          </DocTab>
          <AddTab aria-label="New design"><Svg size={13}><path d="M6.500 0v13M0 6.500h13" stroke="#808080" strokeWidth="3" /></Svg></AddTab>
          <AccountTools>
            <button aria-label="Extensions">
              <Svg size={17}><path d="M11 2A7 7 0 1 0 15 6" stroke="#666" strokeWidth="2" /><path d="M6 8l5-5 1 2 3-3 1 1-3 3 2 1-5 5-2-2-3 3-1-1 3-3z" fill="#666" /></Svg>
            </button>
            <button aria-label="Job status">
              <Svg size={17}><circle cx="8.500" cy="8.500" r="7.800" stroke="#666" /><circle cx="8.500" cy="8.500" r="6.200" fill="#666" /><path d="M8.500 4v5h4" stroke="#ddd" strokeWidth="1.500" /></Svg>
            </button>
            <button aria-label="Notifications">
              <Svg size={17}><path d="M2 13q2-2 2-6 0-4 3.500-5V0h2v2Q13 3 13 7q0 4 2 6zM6.500 14h4q-2 3-4 0z" fill="#666" /></Svg>
            </button>
            <button aria-label="Help">
              <Svg size={17}><circle cx="8.500" cy="8.500" r="8" fill="#666" /><path d="M5.800 6.500q0-2.500 2.800-2.500t2.700 2.200q0 1.300-1.500 2-1.100.6-1.100 2M8.600 11.500v2" stroke="#ddd" strokeWidth="1.800" /></Svg>
            </button>
            <QuickButton aria-label="Account"><span /><Avatar /></QuickButton>
          </AccountTools>
        </TabBar>

        <Ribbon>
          <WorkspaceButton>DESIGN <Caret /></WorkspaceButton>
          <div>
            <RibbonTabs>
              {ribbonTabs.map((name, i) => <RibbonTab key={name} $active={i === 0}>{name}</RibbonTab>)}
            </RibbonTabs>
            <Groups>
              {groups.map(([label, width, tools]) => (
                <Group key={label} $width={width}>
                  <GroupTools>
                    {tools.map((tool) => (
                      <Tool key={tool} aria-label={tool} $selected={tool === "select"}>
                        {tool === "select" ? <SelectIcon /> : <Svg size={32}>{art[tool]}</Svg>}
                      </Tool>
                    ))}
                  </GroupTools>
                  <GroupLabel>{label}<Caret /></GroupLabel>
                </Group>
              ))}
            </Groups>
          </div>
        </Ribbon>
        <RibbonEdge />

        <Canvas>
          <Model />
          <BrowserPanel>
            <PanelBar>
              <button aria-label="Collapse browser"><Svg w={11} h={6}><path d="M5 0v6L0 3zM11 0v6L5.500 3z" fill="#333" /></Svg></button>
              <PanelTitle>BROWSER</PanelTitle>
              <button aria-label="Minimize browser"><Svg size={9}><circle cx="4.500" cy="4.500" r="4.500" fill="#333" /><path d="M2 4.500h5" stroke="#fff" strokeWidth="1.500" /></Svg></button>
            </PanelBar>
            <TreeRow>
              <button aria-label="Expand"><Svg w={12} h={14}><path d="M2 1v12h2l6-6-6-6z" fill="#fff" stroke="#333" strokeWidth="1.200" /></Svg></button>
              <TreeItem>
                <button aria-label="Visibility"><Svg w={16} h={10}><path d="M0 5q8-10 16 0-8 10-16 0z" fill="#aaa" /><circle cx="8" cy="5" r="3" fill="#888" stroke="#f1f1f1" /></Svg></button>
                <TreeName>
                  <Svg w={18} h={16}>
                    <path d="M1.500 3.500l2-2h5l1 1V7h4l3 3v4l-1 1.500h-14z" fill="#f4f4f4" stroke="#333" />
                    <path d="M8 15V8l2-1M8 8h5l3 3M1.500 8.500H8" stroke="#888" />
                  </Svg>
                  mono_switch_cover v2
                </TreeName>
                <button aria-label="Activate component"><Svg size={14}><circle cx="7" cy="7" r="6" fill="#fff" stroke="#333" /><circle cx="7" cy="7" r="2.200" fill="#222" /></Svg></button>
              </TreeItem>
            </TreeRow>
          </BrowserPanel>
          <CubeHolder><ViewCube /></CubeHolder>
          <CanvasFooter>
            <PanelBar $open>
              <PanelTitle $indent>COMMENTS</PanelTitle>
              <button aria-label="Open comments"><Svg size={9}><circle cx="4.500" cy="4.500" r="4.500" fill="#333" /><path d="M2 4.500h5M4.500 2v5" stroke="#fff" /></Svg></button>
            </PanelBar>
            <NavBar>
              {navTools.map(([name, menu, icon]) => (
                <NavButton key={name} $menu={menu} aria-label={name}>{icon}{menu && <Caret />}</NavButton>
              ))}
            </NavBar>
            <AssistantButton aria-label="Assistant">
              <Svg size={17}><path d="M8.500 0A8.500 8.500 0 1 0 8.500 17H17V8.500A8.500 8.500 0 0 0 8.500 0z" fill="#111" /><path d="M4 11l6-5M7.500 11l5-4v4" stroke="#fff" strokeWidth="1.300" /></Svg>
            </AssistantButton>
          </CanvasFooter>
        </Canvas>

        <Timeline>
          <Playback>
            {playback.map(([name, d]) => (
              <button key={name} aria-label={name}><Svg size={16}><path d={d} fill="#555" stroke="#555" strokeWidth={name === "Play" ? 0 : 1.5} /></Svg></button>
            ))}
          </Playback>
          <Features>
            {features.map(([name, icon], i) => (
              <Feature key={name} $first={i === 0} $last={i === features.length - 1}>
                <button aria-label={name}>{icon}</button>
              </Feature>
            ))}
          </Features>
          <Marker><Svg w={12} h={32}><path d="M0 0h12v4L7 9v23H5V9L0 4z" fill="#5c5c5c" /></Svg></Marker>
          <Spacer />
          <button aria-label="Timeline settings">
            <Svg w={16} h={30}>
              <circle cx="8" cy="15" r="4" stroke="#666" strokeWidth="3.500" />
              <circle cx="8" cy="15" r="6.500" stroke="#666" strokeWidth="2.500" strokeDasharray="2.550 2.550" />
            </Svg>
          </button>
        </Timeline>
      </Window>
    </Frame>
  );
}
